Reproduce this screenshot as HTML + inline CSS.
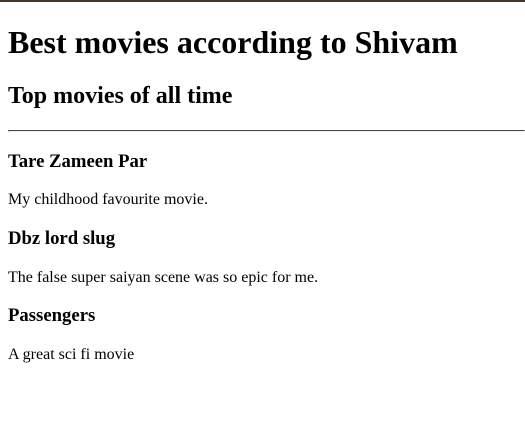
<!DOCTYPE html>
<html><head><meta charset="utf-8"><style>
html,body{background:#fff;}
body{margin:0 0 8px 8px;padding-top:3px;font-family:"Liberation Serif",serif;color:#000;}
.top{position:fixed;top:0;left:0;width:100%;height:2px;background:#4a3426;}
h1{font-size:32px;margin:21.44px 0;}
h2{font-size:24px;margin:19.92px 0;}
h3{font-size:18.72px;margin:18.72px 0;}
p{font-size:16px;margin:16px 0;}
hr{margin:8px 0;border:1px inset #eee;border-top-color:#999;}
</style></head><body>
<div class="top"></div>
<h1>Best movies according to Shivam</h1>
<h2>Top movies of all time</h2>
<hr>
<h3>Tare Zameen Par</h3>
<p>My childhood favourite movie.</p>
<h3>Dbz lord slug</h3>
<p>The false super saiyan scene was so epic for me.</p>
<h3>Passengers</h3>
<p>A great sci fi movie</p>
</body></html>
